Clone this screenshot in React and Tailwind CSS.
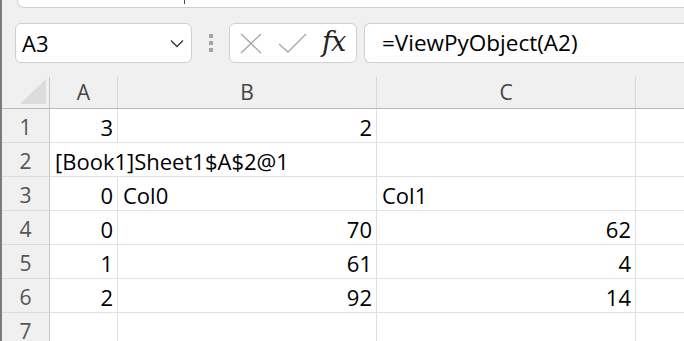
import React from "react";

const rows = [
  { n: "1", a: "3", b: "2", c: "", bAlign: "right", cAlign: "right" },
  { n: "2", a: "[Book1]Sheet1$A$2@1", aLeft: true, b: "", c: "" },
  { n: "3", a: "0", b: "Col0", c: "Col1", bAlign: "left", cAlign: "left" },
  { n: "4", a: "0", b: "70", c: "62", bAlign: "right", cAlign: "right" },
  { n: "5", a: "1", b: "61", c: "4", bAlign: "right", cAlign: "right" },
  { n: "6", a: "2", b: "92", c: "14", bAlign: "right", cAlign: "right" },
  { n: "7", a: "", b: "", c: "" },
];

function Cell({ w, align, children, noRight }) {
  const j = align === "left" ? "justify-start pl-[5px]" : "justify-end pr-[4px]";
  return (
    <div
      className={`${w} shrink-0 h-full flex items-center pt-[4px] ${j} border-b border-[#e1e1e1] ${
        noRight ? "border-r-transparent border-r relative z-10" : "border-r"
      } whitespace-nowrap text-black`}
    >
      {children}
    </div>
  );
}

export default function App() {
  return (
    <div className="flex h-[341px] w-[684px] overflow-hidden font-['Open_Sans',sans-serif]">
      <div className="w-[2px] shrink-0 bg-[#7b7b7b]" />
      <div className="flex-1 flex flex-col bg-[#f0f0f0] min-w-0">
        {/* top box remnant */}
        <div className="ml-[15px] h-[8px] shrink-0 bg-white border-b border-l border-[#d0d0d0] rounded-bl-[7px] relative">
          <div className="absolute left-[166px] top-0 w-[1px] h-[4px] bg-[#444]" />
        </div>

        {/* formula toolbar */}
        <div className="mt-[15px] h-[40px] shrink-0 flex pl-[13px]">
          <div className="w-[177px] h-full bg-white border border-[#d0d0d0] rounded-[6px] flex items-center pl-[6px] pr-[7px] text-[22px] text-black">
            <span className="flex-1">A3</span>
            <svg width="14" height="9" viewBox="0 0 14 9" className="mt-[1px]">
              <path d="M1 1.5 L7 7.5 L13 1.5" fill="none" stroke="#333" strokeWidth="1.3" />
            </svg>
          </div>
          <div className="w-[37px] h-full flex flex-col items-center justify-center gap-[3px]">
            <div className="w-[4px] h-[4px] bg-[#a3a3a3]" />
            <div className="w-[4px] h-[4px] bg-[#a3a3a3]" />
            <div className="w-[4px] h-[4px] bg-[#a3a3a3]" />
          </div>
          <div className="w-[128px] h-full bg-white border border-[#d0d0d0] rounded-[6px] flex items-center pl-[10px]">
            <svg width="22" height="21" viewBox="0 0 22 21">
              <path d="M1 1 L21 20 M21 1 L1 20" stroke="#a8a8a8" strokeWidth="1.4" fill="none" />
            </svg>
            <svg width="29" height="20" viewBox="0 0 29 20" className="ml-[16px]">
              <path d="M1 11 L10 19 L28 1" stroke="#a8a8a8" strokeWidth="1.4" fill="none" />
            </svg>
            <span className="ml-[15px] font-['DejaVu_Serif',serif] italic text-[27px] leading-none text-[#222] -mt-[3px] tracking-[-1px]">
              fx
            </span>
          </div>
          <div className="ml-[7px] flex-1 h-full bg-white border border-r-0 border-[#d0d0d0] rounded-l-[6px] flex items-center pl-[17px] text-[22.5px] text-black whitespace-nowrap">
            =ViewPyObject(A2)
          </div>
        </div>

        {/* grid */}
        <div className="mt-[14px] flex flex-col">
          {/* header row */}
          <div className="h-[32px] flex border-b border-[#b9b9b9] text-[21px] text-[#444]">
            <div className="w-[48px] shrink-0 h-full border-r border-[#c8c8c8] relative">
              <svg width="48" height="31" viewBox="0 0 48 31" className="absolute left-0 top-0">
                <polygon points="44,2 44,27 18,27" fill="#dcdcdc" />
              </svg>
            </div>
            <div className="w-[68px] shrink-0 h-full border-r border-[#d8d8d8] flex items-center justify-center">A</div>
            <div className="w-[259px] shrink-0 h-full border-r border-[#d8d8d8] flex items-center justify-center">B</div>
            <div className="w-[259px] shrink-0 h-full border-r border-[#d8d8d8] flex items-center justify-center">C</div>
            <div className="flex-1 h-full" />
          </div>

          {rows.map((r) => (
            <div key={r.n} className="h-[34px] shrink-0 flex bg-white text-[22px]">
              <div className="w-[48px] shrink-0 h-full bg-[#f0f0f0] border-r border-r-[#c8c8c8] border-b border-b-[#dcdcdc] flex items-center justify-center pt-[4px] text-[21px] text-[#555]">
                {r.n}
              </div>
              <Cell w="w-[68px]" align={r.aLeft ? "left" : "right"} noRight={r.aLeft}>
                {r.a}
              </Cell>
              <Cell w="w-[259px]" align={r.bAlign}>
                {r.b}
              </Cell>
              <Cell w="w-[259px]" align={r.cAlign}>
                {r.c}
              </Cell>
              <div className="flex-1 h-full border-b border-[#e1e1e1]" />
            </div>
          ))}
        </div>
      </div>
    </div>
  );
}
